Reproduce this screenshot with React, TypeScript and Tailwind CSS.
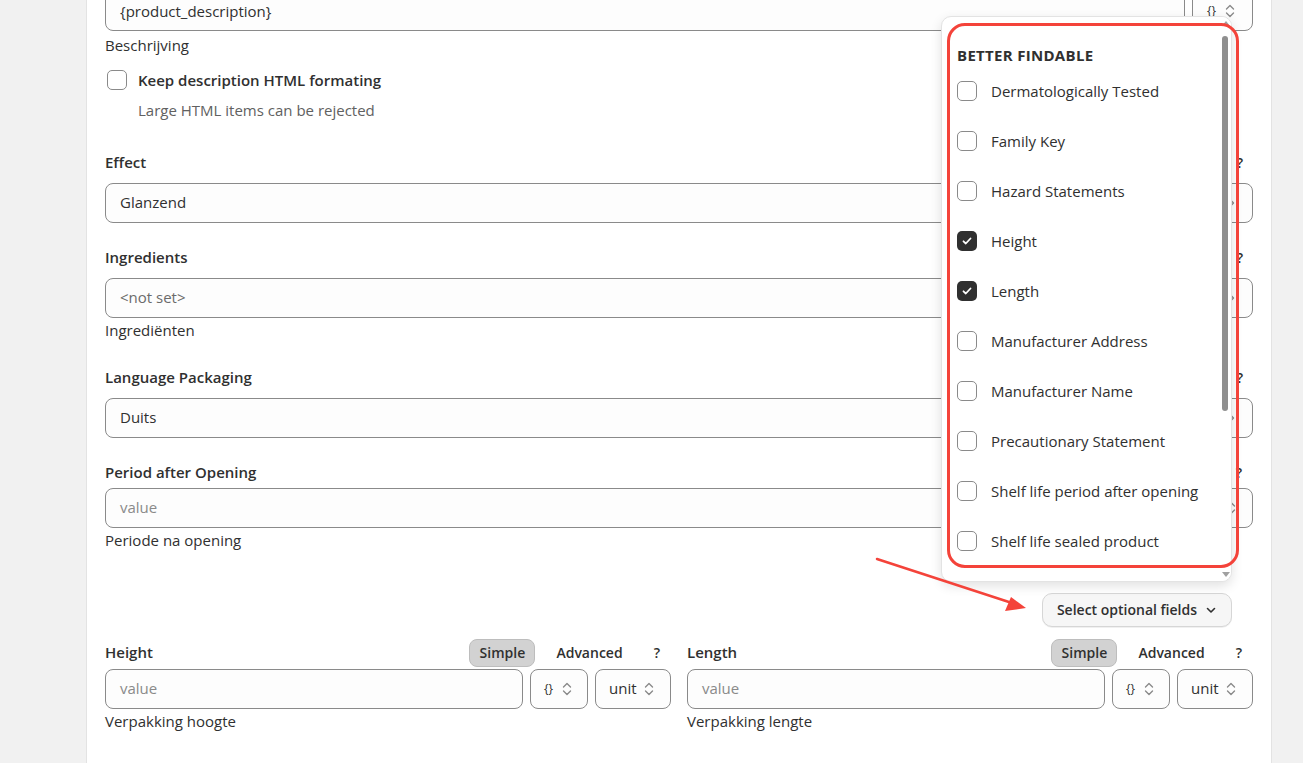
import React from "react";

const font = { fontFamily: '"Open Sans", "Noto Sans", sans-serif' };

function UpDown() {
  return (
    <svg width="10" height="16" viewBox="0 0 10 16" fill="none" stroke="#8a8a8a" strokeWidth="1.4" strokeLinecap="round" strokeLinejoin="round">
      <path d="M1.5 6l3.5-3.5 3.5 3.5" />
      <path d="M1.5 10l3.5 3.5 3.5-3.5" />
    </svg>
  );
}

function Box({ children, className = "" }: { children?: React.ReactNode; className?: string }) {
  return (
    <div className={`h-[40px] rounded-lg border border-[#8a8a8a] bg-[#fdfdfd] flex items-center px-[14px] text-[15px] ${className}`}>
      {children}
    </div>
  );
}

function BraceSelect() {
  return (
    <Box className="w-[58px] shrink-0 gap-[9px] !px-[13px]">
      <span className="text-[12px] text-[#303030]">{"{}"}</span>
      <UpDown />
    </Box>
  );
}

function UnitSelect() {
  return (
    <Box className="w-[76px] shrink-0 gap-[7px] !px-[13px]">
      <span className="text-[#303030]">unit</span>
      <UpDown />
    </Box>
  );
}

function ModeRow({ label }: { label: string }) {
  return (
    <div className="flex items-center h-[28px] text-[14px] font-semibold text-[#303030]">
      <span className="flex-1 text-[15px]">{label}</span>
      <span className="h-[28px] w-[66px] flex items-center justify-center rounded-lg bg-[#d2d2d2] border border-[#bdbdbd]">Simple</span>
      <span className="ml-[21px]">Advanced</span>
      <span className="ml-[31px] mr-[11px]">?</span>
    </div>
  );
}

function UnitField({ label, help }: { label: string; help: string }) {
  return (
    <div>
      <ModeRow label={label} />
      <div className="mt-[2px] flex gap-[7px]">
        <Box className="flex-1 text-[#8a8a8a]">value</Box>
        <BraceSelect />
        <UnitSelect />
      </div>
      <div className="mt-[2px] h-[20px] leading-[20px] text-[15px] text-[#303030]">{help}</div>
    </div>
  );
}

function Label({ text, className = "" }: { text: string; className?: string }) {
  return (
    <div className={`flex items-center h-[20px] text-[15px] font-semibold text-[#303030] ${className}`}>
      <span className="flex-1">{text}</span>
      <span className="mr-[10px] text-[14px]">?</span>
    </div>
  );
}

function SelectField({ value, muted }: { value: string; muted?: boolean }) {
  return (
    <Box className="mt-[10px] justify-between">
      <span className={muted ? "text-[#6b6b6b]" : "text-[#303030]"}>{value}</span>
      <svg width="12" height="12" viewBox="0 0 12 12" fill="none" stroke="#8a8a8a" strokeWidth="1.4" strokeLinecap="round" strokeLinejoin="round">
        <path d="M4 2.5l3.5 3.5L4 9.5" />
      </svg>
    </Box>
  );
}

function Check({ on }: { on?: boolean }) {
  return (
    <span
      className={`w-[20px] h-[20px] shrink-0 rounded-[5px] flex items-center justify-center ${
        on ? "bg-[#303030]" : "border border-[#8a8a8a] bg-white"
      }`}
    >
      {on && (
        <svg width="12" height="12" viewBox="0 0 12 12" fill="none" stroke="white" strokeWidth="1.8" strokeLinecap="round" strokeLinejoin="round">
          <path d="M2.5 6.3l2.3 2.2 4.7-5" />
        </svg>
      )}
    </span>
  );
}

const options: { name: string; on?: boolean }[] = [
  { name: "Dermatologically Tested" },
  { name: "Family Key" },
  { name: "Hazard Statements" },
  { name: "Height", on: true },
  { name: "Length", on: true },
  { name: "Manufacturer Address" },
  { name: "Manufacturer Name" },
  { name: "Precautionary Statement" },
  { name: "Shelf life period after opening" },
  { name: "Shelf life sealed product" },
  { name: "Size" },
];

export default function App() {
  return (
    <div className="relative h-[763px] overflow-hidden bg-[#f1f1f1] text-[#303030]" style={font}>
      <div className="ml-[86px] w-[1186px] h-[800px] bg-white border-x border-[#e3e3e3] px-[18px]">
        <div className="-mt-[9px] flex flex-col">
          <div className="flex gap-[7px]">
            <Box className="flex-1 text-[#303030]">{"{product_description}"}</Box>
            <Box className="w-[61px] shrink-0 gap-[9px] !px-[14px]">
              <span className="text-[12px]">{"{}"}</span>
              <UpDown />
            </Box>
          </div>
          <div className="mt-[4px] h-[20px] leading-[20px] text-[15px]">Beschrijving</div>
          <div className="mt-[14px] flex items-center gap-[11px] pl-[2px]">
            <Check />
            <span className="text-[15px] font-semibold">Keep description HTML formating</span>
          </div>
          <div className="mt-[8px] pl-[33px] h-[20px] leading-[20px] text-[15px] text-[#616161]">
            Large HTML items can be rejected
          </div>

          <Label text="Effect" className="mt-[33px]" />
          <SelectField value="Glanzend" />

          <Label text="Ingredients" className="mt-[25px]" />
          <SelectField value="<not set>" muted />
          <div className="mt-[2px] h-[20px] leading-[20px] text-[15px]">Ingrediënten</div>

          <Label text="Language Packaging" className="mt-[28px]" />
          <SelectField value="Duits" />

          <div className="mt-[21px]">
            <ModeRow label="Period after Opening" />
            <div className="mt-[1px] flex gap-[7px]">
              <Box className="flex-1 text-[#8a8a8a]">value</Box>
              <UnitSelect />
            </div>
            <div className="mt-[2px] h-[20px] leading-[20px] text-[15px]">Periode na opening</div>
          </div>

          <div className="mt-[43px] flex justify-end pr-[21px]">
            <button className="h-[34px] w-[190px] rounded-[10px] border border-[#d6d6d6] bg-[#f6f6f6] shadow-[0_1px_0_rgba(0,0,0,0.06)] flex items-center justify-center gap-[8px] text-[14px] font-semibold text-[#303030]">
              Select optional fields
              <svg width="12" height="12" viewBox="0 0 12 12" fill="none" stroke="#303030" strokeWidth="1.6" strokeLinecap="round" strokeLinejoin="round">
                <path d="M2.5 4.5L6 8l3.5-3.5" />
              </svg>
            </button>
          </div>

          <div className="mt-[12px] grid grid-cols-2 gap-[16px]">
            <UnitField label="Height" help="Verpakking hoogte" />
            <UnitField label="Length" help="Verpakking lengte" />
          </div>
        </div>
      </div>

      {/* dropdown popover */}
      <div className="absolute left-[941px] top-[16px] w-[291px] h-[566px] rounded-[10px] bg-white border border-[#e3e3e3] shadow-[0_4px_12px_rgba(0,0,0,0.12)] overflow-hidden">
        <div className="pl-[15px] pr-[14px] pt-[28px]">
          <div className="h-[20px] leading-[20px] text-[15px] font-bold tracking-[0.02em] text-[#303030]">BETTER FINDABLE</div>
          <div className="mt-[1px] flex flex-col">
            {options.map((o) => (
              <div key={o.name} className="h-[50px] flex items-center gap-[14px] text-[15px] text-[#303030]">
                <Check on={o.on} />
                <span>{o.name}</span>
              </div>
            ))}
          </div>
        </div>
        {/* scrollbar */}
        <div className="absolute right-0 top-0 bottom-0 w-[10px] bg-white">
          <svg className="absolute left-[1px] top-[3px]" width="8" height="6" viewBox="0 0 8 6"><path d="M0 6L4 1L8 6z" fill="#a0a0a0" /></svg>
          <div className="absolute left-[1px] top-[19px] h-[375px] w-[6px] rounded-full bg-[#8f8f8f]" />
          <svg className="absolute left-[1px] bottom-[3px]" width="8" height="6" viewBox="0 0 8 6"><path d="M0 0L4 5L8 0z" fill="#a0a0a0" /></svg>
        </div>
      </div>

      {/* annotation */}
      <div className="absolute left-[947px] top-[23px] w-[292px] h-[545px] rounded-[18px] border-[3px] border-[#f4433a] pointer-events-none" />
      <svg className="absolute left-0 top-0 pointer-events-none" width="1303" height="763">
        <line x1="877" y1="559" x2="1012" y2="603" stroke="#f4433a" strokeWidth="2.5" strokeLinecap="round" />
        <polygon points="1026,608 1005,611 1011,597" fill="#f4433a" />
      </svg>
    </div>
  );
}
